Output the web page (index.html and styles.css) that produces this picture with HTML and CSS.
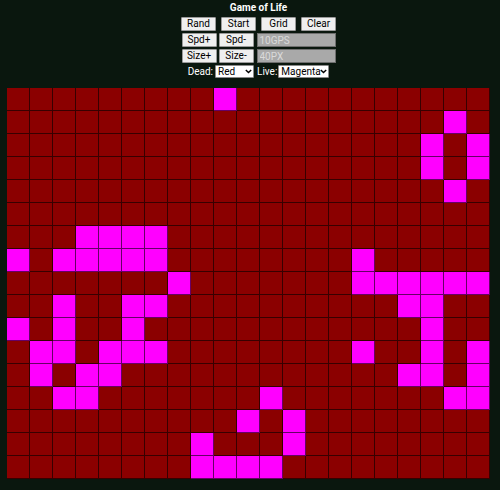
FILE: index.html
```html
<!DOCTYPE html>
<html>
<head>
<meta charset="utf-8">
<title>Game of Life</title>
<link rel="stylesheet" href="styles.css">
</head>
<body>
<div class="header">
  <div class="title">Game of Life</div>
  <div class="row r1">
    <button class="btn">Rand</button>
    <button class="btn">Start</button>
    <button class="btn">Grid</button>
    <button class="btn">Clear</button>
  </div>
  <div class="row r2">
    <button class="btn sm">Spd+</button>
    <button class="btn sm">Spd-</button>
    <input class="field" type="text" value="10GPS" readonly>
  </div>
  <div class="row r2">
    <button class="btn sm">Size+</button>
    <button class="btn sm">Size-</button>
    <input class="field" type="text" value="40PX" readonly>
  </div>
  <div class="row r4">
    <span class="lbl">Dead:</span>
    <span class="selwrap dead">
      <select class="sel"><option>Red</option></select>
      <svg class="chev" width="7" height="5" viewBox="0 0 7 5"><path d="M0.8 0.9 L3.5 3.6 L6.2 0.9" fill="none" stroke="#000" stroke-width="1.4"/></svg>
    </span>
    <span class="lbl live-lbl">Live:</span>
    <span class="selwrap live">
      <select class="sel"><option>Magenta</option></select>
      <svg class="chev" width="7" height="5" viewBox="0 0 7 5"><path d="M0.8 0.9 L3.5 3.6 L6.2 0.9" fill="none" stroke="#000" stroke-width="1.4"/></svg>
    </span>
  </div>
</div>
<div class="board">
<i></i><i></i><i></i><i></i><i></i><i></i><i></i><i></i><i></i><i class="l"></i><i></i><i></i><i></i><i></i><i></i><i></i><i></i><i></i><i></i><i></i><i></i>
<i></i><i></i><i></i><i></i><i></i><i></i><i></i><i></i><i></i><i></i><i></i><i></i><i></i><i></i><i></i><i></i><i></i><i></i><i></i><i class="l"></i><i></i>
<i></i><i></i><i></i><i></i><i></i><i></i><i></i><i></i><i></i><i></i><i></i><i></i><i></i><i></i><i></i><i></i><i></i><i></i><i class="l"></i><i></i><i class="l"></i>
<i></i><i></i><i></i><i></i><i></i><i></i><i></i><i></i><i></i><i></i><i></i><i></i><i></i><i></i><i></i><i></i><i></i><i></i><i class="l"></i><i></i><i class="l"></i>
<i></i><i></i><i></i><i></i><i></i><i></i><i></i><i></i><i></i><i></i><i></i><i></i><i></i><i></i><i></i><i></i><i></i><i></i><i></i><i class="l"></i><i></i>
<i></i><i></i><i></i><i></i><i></i><i></i><i></i><i></i><i></i><i></i><i></i><i></i><i></i><i></i><i></i><i></i><i></i><i></i><i></i><i></i><i></i>
<i></i><i></i><i></i><i class="l"></i><i class="l"></i><i class="l"></i><i class="l"></i><i></i><i></i><i></i><i></i><i></i><i></i><i></i><i></i><i></i><i></i><i></i><i></i><i></i><i></i>
<i class="l"></i><i></i><i class="l"></i><i class="l"></i><i class="l"></i><i class="l"></i><i class="l"></i><i></i><i></i><i></i><i></i><i></i><i></i><i></i><i></i><i class="l"></i><i></i><i></i><i></i><i></i><i></i>
<i></i><i></i><i></i><i></i><i></i><i></i><i></i><i class="l"></i><i></i><i></i><i></i><i></i><i></i><i></i><i></i><i class="l"></i><i class="l"></i><i class="l"></i><i class="l"></i><i class="l"></i><i class="l"></i>
<i></i><i></i><i class="l"></i><i></i><i></i><i class="l"></i><i class="l"></i><i></i><i></i><i></i><i></i><i></i><i></i><i></i><i></i><i></i><i></i><i class="l"></i><i class="l"></i><i></i><i></i>
<i class="l"></i><i></i><i class="l"></i><i></i><i></i><i class="l"></i><i></i><i></i><i></i><i></i><i></i><i></i><i></i><i></i><i></i><i></i><i></i><i></i><i class="l"></i><i></i><i></i>
<i></i><i class="l"></i><i class="l"></i><i></i><i class="l"></i><i class="l"></i><i class="l"></i><i></i><i></i><i></i><i></i><i></i><i></i><i></i><i></i><i class="l"></i><i></i><i></i><i class="l"></i><i></i><i class="l"></i>
<i></i><i class="l"></i><i></i><i class="l"></i><i class="l"></i><i></i><i></i><i></i><i></i><i></i><i></i><i></i><i></i><i></i><i></i><i></i><i></i><i class="l"></i><i class="l"></i><i></i><i class="l"></i>
<i></i><i></i><i class="l"></i><i class="l"></i><i></i><i></i><i></i><i></i><i></i><i></i><i></i><i class="l"></i><i></i><i></i><i></i><i></i><i></i><i></i><i></i><i class="l"></i><i class="l"></i>
<i></i><i></i><i></i><i></i><i></i><i></i><i></i><i></i><i></i><i></i><i class="l"></i><i></i><i class="l"></i><i></i><i></i><i></i><i></i><i></i><i></i><i></i><i></i>
<i></i><i></i><i></i><i></i><i></i><i></i><i></i><i></i><i class="l"></i><i></i><i></i><i></i><i class="l"></i><i></i><i></i><i></i><i></i><i></i><i></i><i></i><i></i>
<i></i><i></i><i></i><i></i><i></i><i></i><i></i><i></i><i class="l"></i><i class="l"></i><i class="l"></i><i class="l"></i><i></i><i></i><i></i><i></i><i></i><i></i><i></i><i></i><i></i>
</div>
</body>
</html>
```

FILE: styles.css
```css
html, body {
  margin: 0;
  padding: 0;
  background: #0a170e;
  font-family: Roboto, "Liberation Sans", sans-serif;
  font-size: 10px;
  color: #fff;
}

.header {
  padding-left: 17px;
  display: flex;
  flex-direction: column;
  align-items: center;
  gap: 2px;
}

.title {
  font-weight: bold;
  height: 15px;
  line-height: 15px;
}

.row {
  display: flex;
  align-items: center;
  justify-content: center;
}

.r1 { gap: 5px; }
.r2 { gap: 2px; }
.r4 { gap: 2px; height: 13px; }

.btn {
  box-sizing: border-box;
  width: 35px;
  height: 14px;
  margin: 0;
  padding: 0;
  font-family: Roboto, "Liberation Sans", sans-serif;
  font-size: 10px;
  line-height: 12px;
  color: #000;
  background: #efefef;
  border: 1px solid #9a9a9a;
  border-radius: 1px;
}

.field {
  box-sizing: border-box;
  width: 79px;
  height: 14px;
  margin: 0 0 0 1px;
  padding: 0 2px;
  font-family: Roboto, "Liberation Sans", sans-serif;
  font-size: 10px;
  color: #dadada;
  background: #a9a9a9;
  border: 1px solid #6f6f6f;
  border-radius: 0;
  outline: none;
}

.lbl {
  color: #fff;
  line-height: 13px;
}

.live-lbl { margin-left: 1px; margin-right: -1px; }

.selwrap {
  position: relative;
  display: block;
  height: 13px;
}

.sel {
  -webkit-appearance: none;
  appearance: none;
  display: block;
  box-sizing: border-box;
  width: 100%;
  height: 13px;
  margin: 0;
  padding: 0 0 0 2px;
  font-family: Roboto, "Liberation Sans", sans-serif;
  font-size: 10px;
  line-height: 11px;
  color: #000;
  background: #fff;
  border: 1px solid #8a8a8a;
  border-radius: 1px;
}

.chev {
  position: absolute;
  right: 2px;
  top: 4px;
  pointer-events: none;
}

.dead { width: 39px; }
.live { width: 51px; }

.board {
  display: grid;
  grid-template-columns: repeat(21, 23px);
  grid-auto-rows: 23px;
  margin: 10px 0 0 7px;
  width: 483px;
}

.board i {
  display: block;
  box-sizing: border-box;
  background: #8b0000;
  border-right: 1px solid rgba(0, 0, 0, 0.6);
  border-bottom: 1px solid rgba(0, 0, 0, 0.6);
}

.board i.l {
  background: #ff00ff;
}
```
